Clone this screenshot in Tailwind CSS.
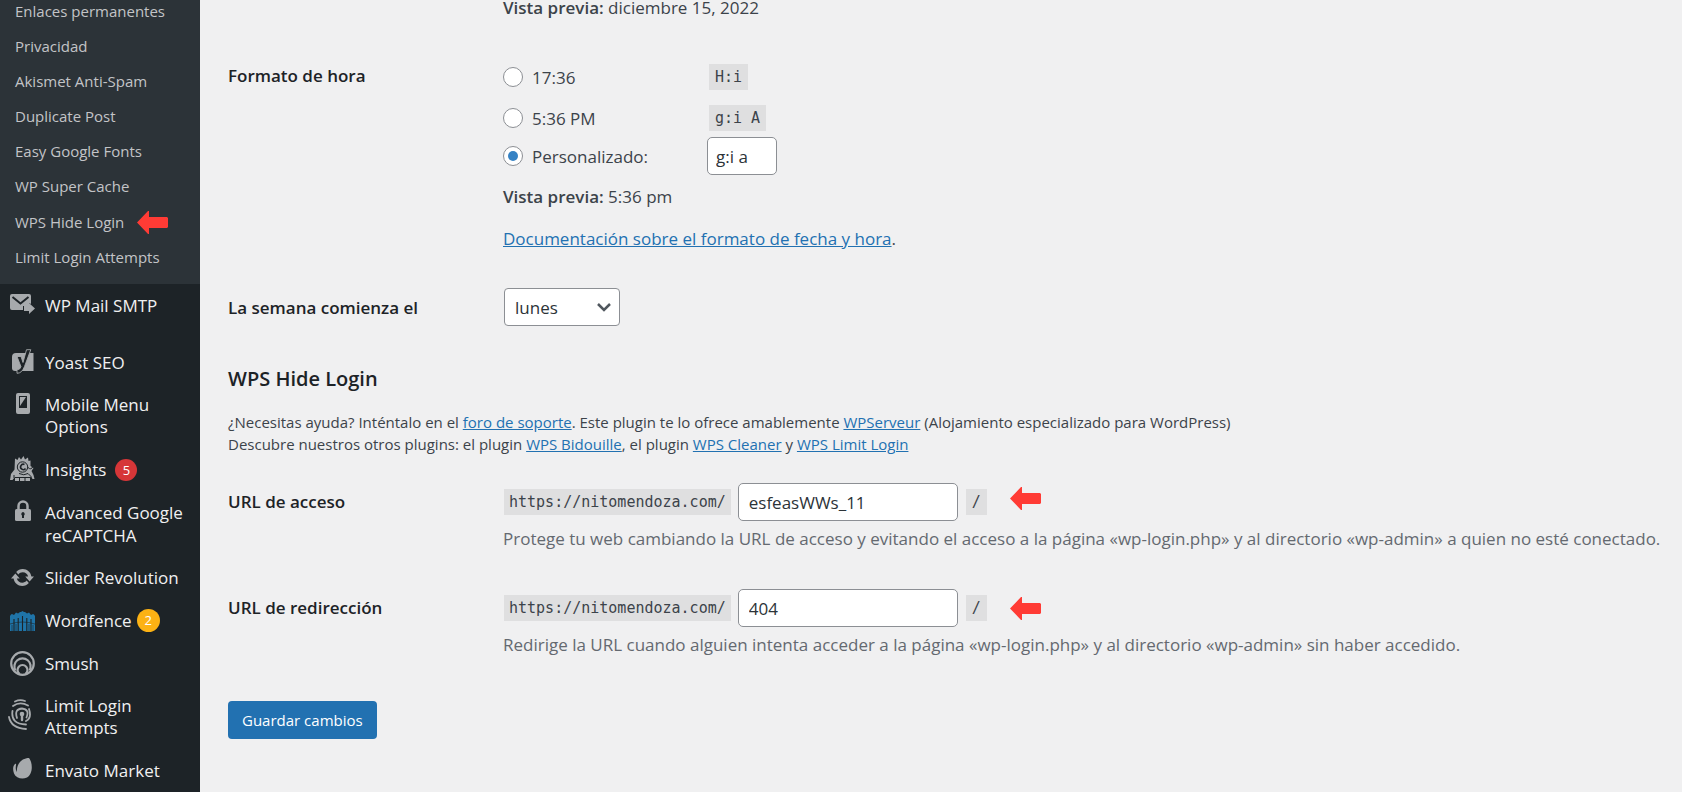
<!DOCTYPE html>
<html lang="es">
  <head>
    <meta charset="UTF-8">
    <meta name="viewport" content="width=device-width, initial-scale=1.0">
    <title>Ajustes generales</title>
    <script src="https://cdn.jsdelivr.net/npm/@tailwindcss/browser@4"></script>
  </head>
  <body class="bg-[#f0f0f1] text-[#3c434a] font-['Segoe_UI','Open_Sans','Noto_Sans',sans-serif] text-[17px] leading-[23px]">
    <div class="flex h-screen overflow-hidden">

      <!-- Admin menu -->
      <nav class="w-[200px] shrink-0 bg-[#1d2327] text-[#f0f0f1]">
        <!-- Settings submenu -->
        <ul class="bg-[#2c3338] text-[#c3c4c7] text-[15px] leading-[21px] pt-px pb-[9px] px-[15px]">
          <li class="pb-[7px]"><a href="#">Enlaces permanentes</a></li>
          <li class="py-[7px]"><a href="#">Privacidad</a></li>
          <li class="py-[7px]"><a href="#">Akismet Anti-Spam</a></li>
          <li class="py-[7px]"><a href="#">Duplicate Post</a></li>
          <li class="py-[7px]"><a href="#">Easy Google Fonts</a></li>
          <li class="pt-[7px] pb-2"><a href="#">WP Super Cache</a></li>
          <li class="py-[7px] flex items-center gap-[13px]">
            <a href="#">WPS Hide Login</a>
            <svg class="w-[31px] h-[23px] -my-px" viewBox="0 0 31 23" fill="#ff3b35"><path d="M0 11.5 11 0h1v6h18l1 1v9l-1 1H12v6h-1z"/></svg>
          </li>
          <li class="py-[7px]"><a href="#">Limit Login Attempts</a></li>
        </ul>

        <ul>
          <li class="mb-[14px]">
            <a href="#" class="flex py-[10px] pr-2">
              <span class="w-[45px] shrink-0 flex justify-center">
                <svg class="w-[25px] h-[20px]" viewBox="0 0 25 20" fill="#a7aaad">
                  <path d="M2 0h17a2 2 0 0 1 2 2v8l-2-1v3h-6v4H2a2 2 0 0 1-2-2V2a2 2 0 0 1 2-2z"/>
                  <path d="m2.500 3 8 6.500 8-6.500" fill="none" stroke="#1d2327" stroke-width="2"/>
                  <path d="M14 12h5V9l6 5.500-6 5.500v-3h-5z"/>
                </svg>
              </span>
              WP Mail SMTP
            </a>
          </li>
          <li>
            <a href="#" class="flex py-[10px] pr-2">
              <span class="w-[45px] shrink-0 flex justify-center">
                <svg class="w-[22px] h-[25px] -my-[2px]" viewBox="0 0 22 25" fill="#a7aaad">
                  <path d="M4 4h17.500v18H3a3 3 0 0 1-3-3V8a4 4 0 0 1 4-4z"/>
                  <path d="M14.500.700h4.300L12.500 17.500q-2.500 6.800-7.500 6.800v-3.500q3 0 4-3L5 7.500h4l2 6z" fill="#1d2327" stroke="#a7aaad" stroke-width=".9"/>
                </svg>
              </span>
              Yoast SEO
            </a>
          </li>
          <li>
            <a href="#" class="flex py-[10px] pr-2 leading-[22px]">
              <span class="w-[45px] shrink-0 flex justify-center">
                <svg class="w-[14px] h-[21px] -mt-px" viewBox="0 0 14 21" fill="#a7aaad">
                  <path fill-rule="evenodd" d="M2 0h10a2 2 0 0 1 2 2v17a2 2 0 0 1-2 2H2a2 2 0 0 1-2-2V2a2 2 0 0 1 2-2zM3 3v12h8V3z"/>
                  <path d="M4 4h6l-6 9z"/>
                </svg>
              </span>
              Mobile Menu Options
            </a>
          </li>
          <li>
            <a href="#" class="flex py-[10px] pr-2">
              <span class="w-[45px] shrink-0 flex justify-center">
                <svg class="w-[25px] h-[25px] -mt-[2px]" viewBox="0 0 25 25" fill="#a7aaad">
                  <path d="M5 2.500 7.500 4 9 1l2 2.500L13.500 0l1.500 3.500L18 1.500 18.500 5l2-.5v5.500l3 2-2 3 2 4 1 4h-2l-1.500-3-1 1.500H4.500L2.500 24H0l1-6 3.500-4.500z"/>
                  <path d="M5 21h15v4H5z"/>
                  <circle cx="12.500" cy="11" r="5.200" fill="none" stroke="#1d2327" stroke-width="1"/>
                  <path d="M15.500 12.500a2.700 2.700 0 1 1-1-4" fill="none" stroke="#1d2327" stroke-width="1.600"/>
                  <path d="M18 11.500q3 3 5-1M9 17.500q5 2.500 9 0l3 3M4 19v3M5 21.500h15M9.500 22v3M15 22v3" fill="none" stroke="#1d2327" stroke-width="1"/>
                </svg>
              </span>
              <span class="flex items-center gap-[9px]">Insights <span class="w-[22px] h-[22px] rounded-full bg-[#d63638] text-white text-[13px] leading-[22px] text-center">5</span></span>
            </a>
          </li>
          <li>
            <a href="#" class="flex py-[10px] pr-2">
              <span class="w-[45px] shrink-0 flex justify-center">
                <svg class="w-[16px] h-[21px] -mt-px" viewBox="0 0 16 21" fill="#a7aaad">
                  <path d="M3.500 10V6a4.500 4.500 0 0 1 9 0v4" fill="none" stroke="#a7aaad" stroke-width="2.500"/>
                  <rect y="9" width="16" height="12" rx="1.500"/>
                  <path d="M8 12a2 2 0 0 1 1 3.500V18H7v-2.500A2 2 0 0 1 8 12z" fill="#1d2327"/>
                </svg>
              </span>
              Advanced Google reCAPTCHA
            </a>
          </li>
          <li>
            <a href="#" class="flex py-[10px] pr-2 leading-[22px]">
              <span class="w-[45px] shrink-0 flex justify-center">
                <svg class="w-[25px] h-[25px] -my-[2px]" viewBox="0 0 20 20" fill="#a7aaad">
                  <path d="M10.200 3.280c3.530 0 6.430 2.610 6.920 6h2.080l-3.500 4-3.500-4h2.320c-.45-1.970-2.210-3.450-4.320-3.450-1.450 0-2.730.71-3.540 1.780L4.950 5.660C6.230 4.200 8.110 3.280 10.200 3.280zm-.4 13.440c-3.520 0-6.430-2.610-6.920-6H.8l3.500-4 3.500 4H5.480c.45 1.970 2.210 3.450 4.320 3.450 1.450 0 2.730-.71 3.540-1.780l1.710 1.950c-1.280 1.460-3.150 2.380-5.250 2.380z"/>
                </svg>
              </span>
              Slider Revolution
            </a>
          </li>
          <li>
            <a href="#" class="flex py-[10px] pr-2">
              <span class="w-[45px] shrink-0 flex justify-center items-center">
                <svg class="w-[25px] h-[20px]" viewBox="0 0 25 20" fill="#1f74a8">
                  <path d="M0 5q1-2 2-2l2 1 2-2.500L8 2.500l2-1.500h1l1.500-1L14 1h1l2 1.500 2-1L21 4l2-1q1 0 2 2v15H0z"/>
                  <path d="M4 20V8M8.200 20V7M12.500 20V5M16.800 20V7M21 20V8" fill="none" stroke="#1d2327" stroke-width="1.100"/>
                  <path d="M0 13q12.500-4 25 0M2 14v6M6 13v7M19 13v7M23 14v6" fill="none" stroke="#1d2327" stroke-width=".6"/>
                </svg>
              </span>
              <span class="flex items-center gap-[5px]">Wordfence <span class="w-[23px] h-[23px] rounded-full bg-[#fcb214] text-white text-[13px] leading-[23px] text-center">2</span></span>
            </a>
          </li>
          <li>
            <a href="#" class="flex py-[10px] pr-2">
              <span class="w-[45px] shrink-0 flex justify-center">
                <svg class="w-[25px] h-[25px] -my-px" viewBox="0 0 25 25" fill="none" stroke="#a7aaad" stroke-width="2.200">
                  <circle cx="12.500" cy="12.500" r="11.300"/>
                  <path d="M5.500 19.500a8.100 8.100 0 1 1 14 0"/>
                  <path d="M9.500 23a5 5 0 1 1 6 0"/>
                </svg>
              </span>
              Smush
            </a>
          </li>
          <li>
            <a href="#" class="flex py-[10px] pr-2 leading-[22px]">
              <span class="w-[45px] shrink-0 flex justify-center">
                <svg class="w-[23px] h-[31px] mr-[7px] mt-1" viewBox="0 0 23 31" fill="none" stroke="#a7aaad" stroke-width="1.800" stroke-linecap="round">
                  <path d="M7 2.500Q12 0 17 2M5 7q7-5 15-.5M1 18q2 11 17 12M4.500 12q-2 13 13.500 13.500M21 10q3 9-3 12M9 19q-3-9 5-9.500 8 1 4.500 9"/>
                  <circle cx="14" cy="15" r="2.300" fill="#a7aaad" stroke="none"/>
                  <path d="M14 16v5" stroke-width="2.400"/>
                </svg>
              </span>
              Limit Login Attempts
            </a>
          </li>
          <li>
            <a href="#" class="flex py-[10px] pr-2">
              <span class="w-[45px] shrink-0 flex justify-center">
                <svg class="w-[19px] h-[21px] -mt-px" viewBox="0 0 19 21" fill="#a7aaad">
                  <path d="M16 0c4 5 4 16-2 19.500C9 22 3 20 1 15.500-.5 11 0 8 2 6c1-.5 1.300 0 1 1-.5 3-.3 5 1 7C3 6 9 0 16 0z"/>
                </svg>
              </span>
              Envato Market
            </a>
          </li>
        </ul>
      </nav>

      <!-- General settings form -->
      <form class="flex-1 min-w-0 pl-7">
        <p class="pl-[275px] leading-4"><strong class="font-semibold">Vista previa:</strong> diciembre 15, 2022</p>

        <div class="flex pt-12">
          <h3 class="w-[275px] shrink-0 font-semibold text-[#1d2327]">Formato de hora</h3>
          <div>
            <div class="grid grid-cols-[206px_auto] items-center">
              <label class="flex items-center gap-[9px]">
                <input type="radio" name="time_format" class="appearance-none w-5 h-5 rounded-full border border-[#8c8f94] bg-white">
                17:36
              </label>
              <code class="justify-self-start bg-[#dfdfe0] px-[6px] text-[15px] leading-[26px] font-['DejaVu_Sans_Mono',monospace]">H:i</code>
            </div>
            <div class="grid grid-cols-[206px_auto] items-center mt-[15px]">
              <label class="flex items-center gap-[9px]">
                <input type="radio" name="time_format" class="appearance-none w-5 h-5 rounded-full border border-[#8c8f94] bg-white">
                5:36 PM
              </label>
              <code class="justify-self-start bg-[#dfdfe0] px-[6px] text-[15px] leading-[26px] font-['DejaVu_Sans_Mono',monospace]">g:i A</code>
            </div>
            <div class="grid grid-cols-[204px_auto] items-center mt-[6px]">
              <label class="flex items-center gap-[9px]">
                <input type="radio" name="time_format" checked class="appearance-none w-5 h-5 rounded-full border border-[#8c8f94] bg-white flex items-center justify-center before:w-[10px] before:h-[10px] before:rounded-full before:bg-[#3582c4]">
                Personalizado:
              </label>
              <input type="text" aria-label="Formato de hora personalizado" value="g:i a" class="w-[70px] h-[38px] px-2 rounded-[5px] border border-[#8c8f94] bg-white text-[#2c3338]">
            </div>
            <p class="mt-[10px]"><strong class="font-semibold">Vista previa:</strong> 5:36 pm</p>
            <p class="mt-[19px]"><a href="#" class="text-[#2271b1] underline">Documentación sobre el formato de fecha y hora</a>.</p>
          </div>
        </div>

        <div class="flex items-center mt-[38px]">
          <label for="start_of_week" class="w-[276px] shrink-0 font-semibold text-[#1d2327]">La semana comienza el</label>
          <div class="relative">
            <select id="start_of_week" class="appearance-none w-[116px] h-[38px] pl-[10px] rounded-[4px] border border-[#8c8f94] bg-white text-[#2c3338]">
              <option>lunes</option>
            </select>
            <svg class="absolute right-[9px] top-[15px] w-[14px] h-[9px] pointer-events-none" viewBox="0 0 14 9" fill="none" stroke="#50575e" stroke-width="2.500"><path d="m1 1 6 6 6-6"/></svg>
          </div>
        </div>

        <h2 class="mt-[41px] text-[20px] leading-6 font-semibold text-[#1d2327]">WPS Hide Login</h2>
        <p class="mt-5 text-[15px] leading-[22px]">
          ¿Necesitas ayuda? Inténtalo en el <a href="#" class="text-[#2271b1] underline">foro de soporte</a>. Este plugin te lo ofrece amablemente <a href="#" class="text-[#2271b1] underline">WPServeur</a> (Alojamiento especializado para WordPress)<br>
          Descubre nuestros otros plugins: el plugin <a href="#" class="text-[#2271b1] underline">WPS Bidouille</a>, el plugin <a href="#" class="text-[#2271b1] underline">WPS Cleaner</a> y <a href="#" class="text-[#2271b1] underline">WPS Limit Login</a>
        </p>

        <div class="flex mt-7">
          <label for="whl_page" class="w-[275px] shrink-0 pt-[7px] font-semibold text-[#1d2327]">URL de acceso</label>
          <div>
            <div class="flex items-center pl-px">
              <code class="bg-[#dfdfe0] px-[5px] text-[15px] leading-[26px] font-['DejaVu_Sans_Mono',monospace]">https://nitomendoza.com/</code>
              <input type="text" id="whl_page" value="esfeasWWs_11" class="ml-[7px] w-[220px] h-[38px] px-[10px] rounded-[5px] border border-[#8c8f94] bg-white text-[#2c3338]">
              <code class="ml-2 bg-[#dfdfe0] px-[6px] text-[15px] leading-[26px] font-['DejaVu_Sans_Mono',monospace]">/</code>
              <svg class="ml-[23px] mb-2 w-[31px] h-[23px]" viewBox="0 0 31 23" fill="#ff3b35"><path d="M0 11.500 11 0h1v6h18l1 1v9l-1 1H12v6h-1z"/></svg>
            </div>
            <p class="mt-[6px] text-[#646970]">Protege tu web cambiando la URL de acceso y evitando el acceso a la página «wp-login.php» y al directorio «wp-admin» a quien no esté conectado.</p>
          </div>
        </div>

        <div class="flex mt-[39px]">
          <label for="whl_redirect_admin" class="w-[275px] shrink-0 pt-[7px] font-semibold text-[#1d2327]">URL de redirección</label>
          <div>
            <div class="flex items-center pl-px">
              <code class="bg-[#dfdfe0] px-[5px] text-[15px] leading-[26px] font-['DejaVu_Sans_Mono',monospace]">https://nitomendoza.com/</code>
              <input type="text" id="whl_redirect_admin" value="404" class="ml-[7px] w-[220px] h-[38px] px-[10px] rounded-[5px] border border-[#8c8f94] bg-white text-[#2c3338]">
              <code class="ml-2 bg-[#dfdfe0] px-[6px] text-[15px] leading-[26px] font-['DejaVu_Sans_Mono',monospace]">/</code>
              <svg class="ml-[23px] w-[31px] h-[23px]" viewBox="0 0 31 23" fill="#ff3b35"><path d="M0 11.500 11 0h1v6h18l1 1v9l-1 1H12v6h-1z"/></svg>
            </div>
            <p class="mt-[6px] text-[#646970]">Redirige la URL cuando alguien intenta acceder a la página «wp-login.php» y al directorio «wp-admin» sin haber accedido.</p>
          </div>
        </div>

        <button type="submit" class="mt-[45px] h-[38px] px-[14px] rounded-[4px] bg-[#2271b1] text-white text-[15px]">Guardar cambios</button>
      </form>
    </div>
  </body>
</html>
